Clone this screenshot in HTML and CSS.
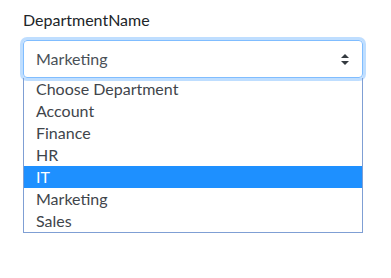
FILE: index.html
```html
<!DOCTYPE html>
<html lang="en">
<head>
    <meta charset="UTF-8">
    <title>Department</title>
    <link rel="stylesheet" href="styles.css">
</head>
<body>
    <div class="form-group">
        <label class="form-label">DepartmentName</label>
        <div class="select-wrap">
            <div class="form-select">
                <span class="select-value">Marketing</span>
                <svg class="select-arrow" width="8" height="11" viewBox="0 0 8 11">
                    <path d="M4 0 L8 4 L0 4 Z M0 7 L8 7 L4 11 Z" fill="#343a40"/>
                </svg>
            </div>
            <ul class="select-menu">
                <li class="option">Choose Department</li>
                <li class="option">Account</li>
                <li class="option">Finance</li>
                <li class="option">HR</li>
                <li class="option active">IT</li>
                <li class="option">Marketing</li>
                <li class="option">Sales</li>
            </ul>
        </div>
    </div>
</body>
</html>
```

FILE: styles.css
```css
body {
    margin: 0;
    padding: 8px 23px;
    background: #fff;
    font-family: Lato, "Noto Sans", sans-serif;
    font-size: 16px;
    line-height: 1.5;
    color: #212529;
}
.form-label {
    display: block;
    margin-bottom: 8px;
}
.select-wrap {
    width: 340px;
}
.form-select {
    display: flex;
    align-items: center;
    justify-content: space-between;
    height: 38px;
    box-sizing: border-box;
    padding: 0 13px 0 12px;
    border: 1px solid #80bdff;
    border-radius: 4px;
    box-shadow: 0 0 0 3px rgba(0, 123, 255, 0.25);
    color: #495057;
}
.select-menu {
    list-style: none;
    margin: 0;
    padding: 0;
    border: 1px solid #7f9fd4;
    border-top: none;
    width: 338px;
}
.option {
    height: 22px;
    line-height: 22px;
    padding-left: 12px;
    color: #3f454b;
}
.option.active {
    background: #1e90ff;
    color: #fff;
}
```
